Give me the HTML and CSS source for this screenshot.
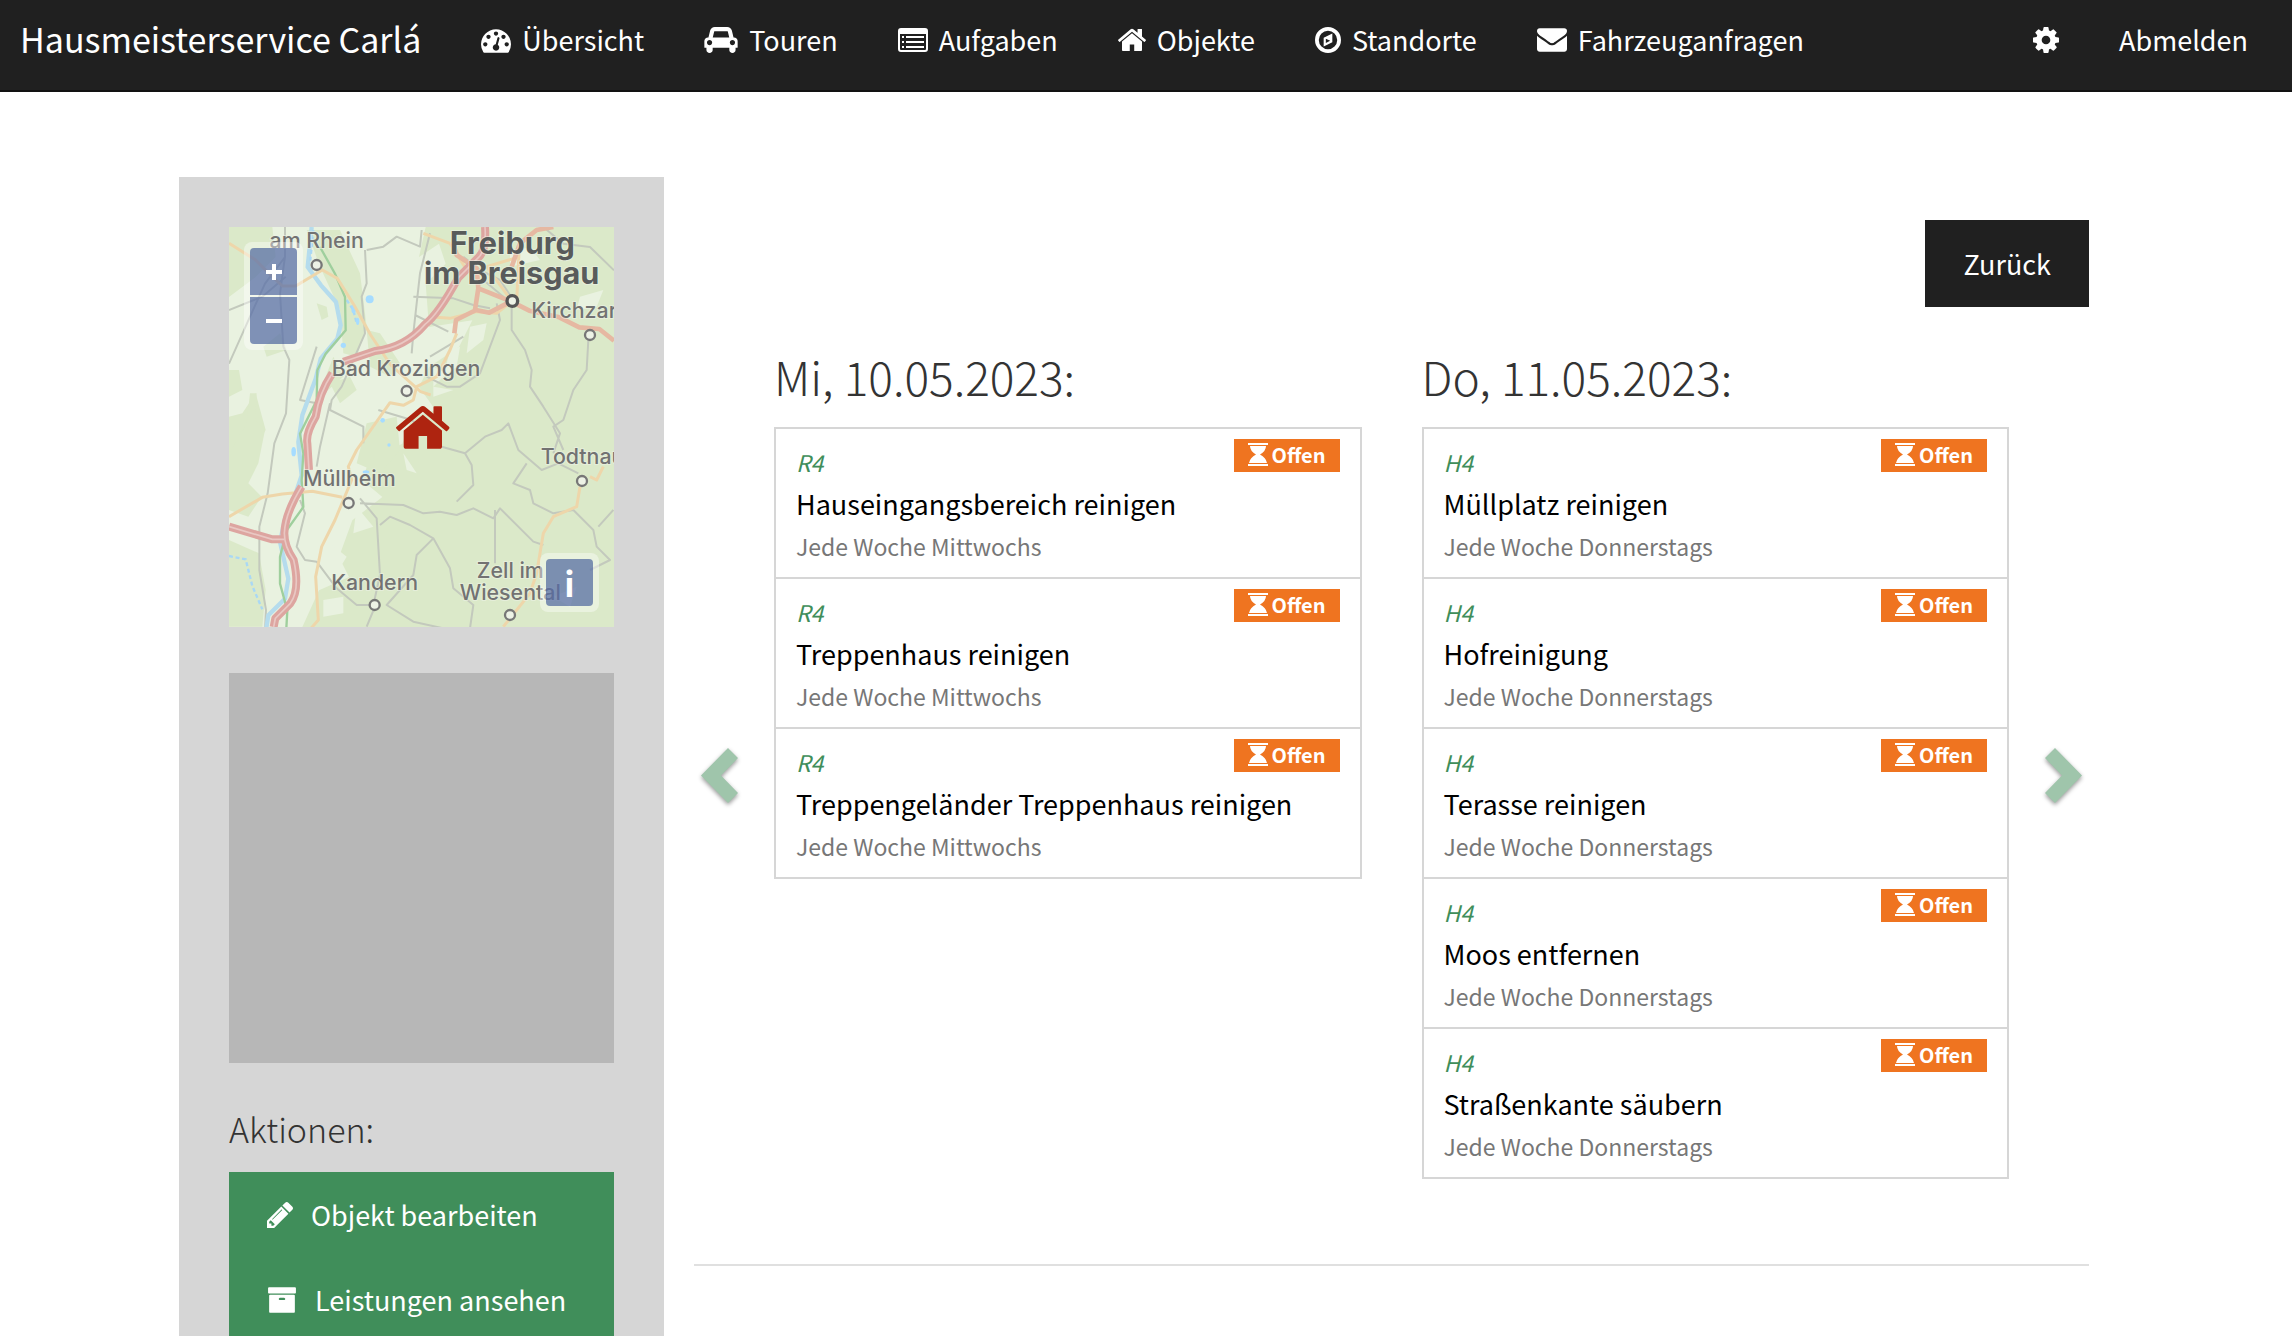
FILE: index.html
```html
<!DOCTYPE html>
<html lang="de">
<head>
<meta charset="utf-8">
<meta name="viewport" content="width=device-width, initial-scale=1">
<title>Hausmeisterservice Carlá</title>
<link rel="stylesheet" href="styles.css">
</head>
<body>
<svg class="sprite" aria-hidden="true">
  <symbol id="i-dash" viewBox="0 128 1792 1536"><path d="M384 1152q0-53-37.5-90.5t-90.5-37.5-90.5 37.5-37.5 90.5 37.5 90.5 90.5 37.5 90.5-37.5 37.5-90.5zm192-448q0-53-37.5-90.5t-90.5-37.5-90.5 37.5-37.5 90.5 37.5 90.5 90.5 37.5 90.5-37.5 37.5-90.5zm428 481l101-382q6-26-7.500-48.500t-38.500-29.500-48 6.500-30 39.500l-101 382q-60 5-107 43.500t-63 98.500q-20 77 20 146t117 89 146-20 89-117q16-60-6-117t-72-91zm660-33q0-53-37.500-90.500t-90.500-37.500-90.500 37.500-37.500 90.500 37.500 90.500 90.500 37.500 90.500-37.500 37.500-90.500zm-640-640q0-53-37.500-90.500t-90.500-37.500-90.500 37.500-37.500 90.500 37.500 90.500 90.500 37.500 90.500-37.500 37.500-90.500zm448 192q0-53-37.500-90.500t-90.500-37.500-90.500 37.500-37.500 90.500 37.500 90.500 90.500 37.500 90.500-37.500 37.500-90.500zm320 448q0 261-141 483-19 29-54 29h-1402q-35 0-54-29-141-221-141-483 0-182 71-348t191-286 286-191 348-71 348 71 286 191 191 286 71 348z"/></symbol>
  <symbol id="i-car" viewBox="0 128 2048 1600"><path d="M480 1088q0-66-47-113t-113-47-113 47-47 113 47 113 113 47 113-47 47-113zm36-320h1016l-89-357q-2-8-14-17.500t-21-9.500h-768q-9 0-21 9.500t-14 17.500zm1372 320q0-66-47-113t-113-47-113 47-47 113 47 113 113 47 113-47 47-113zm160-96v384q0 14-9 23t-23 9h-96v128q0 80-56 136t-136 56-136-56-56-136v-128h-1024v128q0 80-56 136t-136 56-136-56-56-136v-128h-96q-14 0-23-9t-9-23v-384q0-93 65.500-158.500t158.500-65.500h28l105-419q23-94 104-157.500t179-63.500h768q98 0 179 63.500t104 157.500l105 419h28q93 0 158.500 65.500t65.500 158.500z"/></symbol>
  <symbol id="i-list" viewBox="0 0 30 26"><path fill-rule="evenodd" d="M3 1h24a3 3 0 0 1 3 3v18a3 3 0 0 1-3 3H3a3 3 0 0 1-3-3V4a3 3 0 0 1 3-3zM2 7v15q0 1 1 1h24q1 0 1-1V7zM4 9h2v2H4zm4 0h18v2H8zM4 14h2v2H4zm4 0h18v2H8zM4 19h2v2H4zm4 0h18v2H8z"/></symbol>
  <symbol id="i-home" viewBox="89 256 1614 1280"><path d="M1472 992v480q0 26-19 45t-45 19h-384v-384h-256v384h-384q-26 0-45-19t-19-45v-480q0-1 .5-3t.5-3l575-474 575 474q1 2 1 6zm223-69l-62 74q-8 9-21 11h-3q-13 0-21-7l-692-577-692 577q-12 8-24 7-13-2-21-11l-62-74q-8-10-7-23.500t11-21.500l719-599q32-26 76-26t76 26l244 204v-195q0-14 9-23t23-9h192q14 0 23 9t9 23v408l219 182q10 8 11 21.500t-7 23.500z"/></symbol>
  <symbol id="i-compass" viewBox="128 128 1536 1536"><path fill-rule="evenodd" d="M896 128a768 768 0 1 1 0 1536a768 768 0 1 1 0-1536zM896 352a544 544 0 1 0 0 1088a544 544 0 1 0 0-1088zM1152 509v518l-512 256v-518zM768 819v256l256-128z"/></symbol>
  <symbol id="i-mail" viewBox="0 256 1792 1408"><path d="M1792 710v794q0 66-47 113t-113 47h-1472q-66 0-113-47t-47-113v-794q44 49 101 87 362 246 497 345 57 42 92.500 65.500t94.500 48 110 24.500h2q51 0 110-24.500t94.500-48 92.500-65.500q170-123 498-345 57-39 100-87zm0-294q0 79-49 151t-122 123q-376 261-468 325-10 7-42.500 31t-54 38.500-52 32.500-57.500 27-50 9h-2q-23 0-50-9t-57.500-27-52-32.500-54-38.500-42.500-31q-91-64-262-182.500t-205-142.500q-62-42-117-115.500t-55-136.500q0-78 41.500-130t118.500-52h1472q65 0 112.500 47t47.500 113z"/></symbol>
  <symbol id="i-cog" viewBox="128 128 1536 1536"><path d="M1152 896q0-106-75-181t-181-75-181 75-75 181 75 181 181 75 181-75 75-181zm512-109v222q0 12-8 23t-20 13l-185 28q-19 54-39 91 35 50 107 138 10 12 10 25t-9 23q-27 37-99 108t-94 71q-12 0-26-9l-138-108q-44 23-91 38-16 136-29 186-7 28-36 28h-222q-14 0-24.500-8.500t-11.500-21.500l-28-184q-49-16-90-37l-141 107q-10 9-25 9-14 0-25-11-126-114-165-168-7-10-7-23 0-12 8-23 15-21 51-66.500t54-70.500q-27-50-41-99l-183-27q-13-2-21-12.500t-8-23.500v-222q0-12 8-23t19-13l186-28q14-46 39-92-40-57-107-138-10-12-10-24 0-10 9-23 26-36 98.500-107.500t94.500-71.500q13 0 26 10l138 107q44-23 91-38 16-136 29-186 7-28 36-28h222q14 0 24.500 8.500t11.500 21.500l28 184q49 16 90 37l142-107q9-9 24-9 13 0 25 10 129 119 165 170 7 8 7 22 0 12-8 23-15 21-51 66.500t-54 70.500q26 50 41 98l183 28q13 2 21 12.500t8 23.500z"/></symbol>
  <symbol id="i-pencil" viewBox="128 149 1515 1515"><path d="M491 1536l91-91-235-235-91 91v107h128v128h107zm523-928q0-22-22-22-10 0-17 7l-542 542q-7 7-7 17 0 22 22 22 10 0 17-7l542-542q7-7 7-17zm-54-192l416 416-832 832h-416v-416zm683 96q0 53-37 90l-166 166-416-416 166-165q36-38 90-38 53 0 91 38l235 234q37 39 37 91z"/></symbol>
  <symbol id="i-archive" viewBox="0 128 1792 1536"><path d="M1088 832q0-26-19-45t-45-19h-256q-26 0-45 19t-19 45 19 45 45 19h256q26 0 45-19t19-45zm576-192v960q0 26-19 45t-45 19h-1408q-26 0-45-19t-19-45v-960q0-26 19-45t45-19h1408q26 0 45 19t19 45zm64-448v256q0 26-19 45t-45 19h-1536q-26 0-45-19t-19-45v-256q0-26 19-45t45-19h1536q26 0 45 19t19 45z"/></symbol>
  <symbol id="i-hourglass" viewBox="0 0 20 23"><path d="M0 0h20v2H0zM0 21h20v2H0zM2 3h16q0 5-6 8.500q6 3 7 8.500H1q1-5.500 7-8.500Q2 8 2 3z"/></symbol>
  <symbol id="i-left" viewBox="0 0 37 55"><path d="M27 0l10 10-17 17.500 17 17.500-10 10L0 27.500z"/></symbol>
  <symbol id="i-right" viewBox="0 0 37 55"><path d="M10 0L0 10l17 17.500L0 45l10 10 27-27.500z"/></symbol>
</svg>

<nav class="navbar">
  <a class="brand" href="#">Hausmeisterservice Carlá</a>
  <div class="nav-links">
    <a href="#"><svg class="icon w30"><use href="#i-dash"/></svg>Übersicht</a>
    <a href="#"><svg class="icon w34"><use href="#i-car"/></svg>Touren</a>
    <a href="#"><svg class="icon w30"><use href="#i-list"/></svg>Aufgaben</a>
    <a href="#"><svg class="icon w28"><use href="#i-home"/></svg>Objekte</a>
    <a href="#"><svg class="icon w26"><use href="#i-compass"/></svg>Standorte</a>
    <a href="#"><svg class="icon w30"><use href="#i-mail"/></svg>Fahrzeuganfragen</a>
  </div>
  <div class="nav-links nav-right">
    <a href="#" aria-label="Einstellungen"><svg class="icon w26"><use href="#i-cog"/></svg></a>
    <a href="#">Abmelden</a>
  </div>
</nav>

<div class="layout">
  <aside class="sidebar">
    <div class="map">
      <svg class="map-canvas" viewBox="177 171 1155 1200" preserveAspectRatio="xMidYMid slice">
        <rect x="177" y="171" width="1155" height="1200" fill="#dbe9c9"/>
        <path fill="#e9f2e0" d="M177 171h590l-20 90 60-40 20 60-60 60 10 130 130-20-40 80-90 60-30 60 50 70-70 20-30 80-100 50-20 60 60 50-90 70-40 110 30 60-90 40-50 110 20 60-60 60-20 130H240l-63-200V850l60 10 50-80-30-110-40 60-40 10z"/>
        <g fill="#dbe9c9">
          <path d="M177 171h130l10 90-60 60-80 60zM177 600l30 0 10 60-40 20zM230 760l10-90h20l-5 80 30 30-20 100-30 60 40 40-40 60-58-20V850zM410 180h100l60 130 20 160-30 90-40-10-10-130-60-130zM590 480l40 10 60 90-30 40-60-30zM480 640l60-20 20 40-50 40zM590 760l90-20 10 100-60 70-70-30zM490 560l30 60-80 70zM280 530l50-40 20 50-60 20zM440 400l30 10 5 30-20 10z"/>
          <path d="M177 1110l90 40 20 110-10 110H177z"/>
        </g>
        <g fill="#e9f2e0"><path d="M840 540l30-10-10 60-40 30zM900 470l50-10-10 50-50 40zM790 590l40 20-40 40 60 10-60 20zM1020 250l60-20 30 40-90 20zM1230 380l70-20-20 50-60 10zM700 850l40 60-30-10zM560 1010l50 60-60 20zM480 1120l50 40-30 50-60-20zM460 1290l60-10 0 50-60 10zM1150 1280l70-30-20 60z"/></g>
        <g fill="none" stroke="#c3c9bd" stroke-width="6" stroke-linejoin="round">
          <path d="M345 171v90l-60 80-50 110-58 130M177 420l100-40 70-60M345 260l-15 110 10 160 18 40-10 160-35 90-20 150-25 100v130l20 120-5 100"/>
          <path d="M585 240l5 100-15 40 10 110-70 160-30 40-5 30 100 50v50M590 240l50-10 40-30 70 30 5-50M480 700l-30 130-10 60M780 190l-30 120-20 180-5 60M730 380l120 5 60 20 50 10M780 560l100-60M735 435l100 50M440 700l-50-10 50-160"/>
          <path d="M390 990l15 40-25 100 25 40 35 5 60 80 60 50h50l20-90-10-170-50-60M570 1000l130 5 60 25 50-5 50 10 50-20 60 30 20-30 100 100 30 10M860 995l50-50-5-60-20-35-70-20-90-80-100-30M885 850l60-50 50-20 20-20 30 80 70 60 50-20 60 30M1070 880l-40 60 50 20 10 40 60 30 60-10 60 60 10 50 40 40-60 30"/>
          <path d="M1025 410v70l40 60 20 60-5 50 40 60 50 80-20 60M980 400l10 50-60 160-60 40h-40l-60-30M1255 510l-5 90-40 60-30 90-30 20 30 70M1330 1020l-45 50M975 1020v160M630 1065l30-25 60 25 70 40 50 90 10 60 60 50-10 70 60 60 90-10M790 1105l-50 50-10 60-80 90 80 50 90 20M615 1310l-25 60"/>
          <path d="M1120 171l60 50 80 10 72 70M880 260l50 40 60 30 40 60M940 330l60 50"/>
        </g>
        <g fill="none" stroke="#b5dced" stroke-width="13" stroke-linejoin="round">
          <path d="M425 171l-12 120 40 55 45 50 14 70-10 40-50 60-15 60-40 110-12 80 10 100-20 60-30 70-15 70 25 110-10 60-50 50-10 64"/>
        </g>
        <path fill="none" stroke="#a9d8f5" stroke-width="7" stroke-dasharray="12 8" d="M177 1158l50 10 20 80 30 70M530 390l20 30 10 40M430 180l-10 100"/>
        <g fill="#a6dcff"><circle cx="599" cy="388" r="12"/><ellipse cx="551" cy="416" rx="7" ry="14"/><ellipse cx="563" cy="454" rx="5" ry="11"/><circle cx="520" cy="526" r="8"/><circle cx="638" cy="751" r="7"/><ellipse cx="588" cy="906" rx="10" ry="5"/><ellipse cx="371" cy="845" rx="7" ry="14"/><circle cx="657" cy="825" r="5"/></g>
        <path fill="none" stroke="#9fcf9d" stroke-width="7" d="M450 231l45 80 30 70 2 100-60 70-25 50-2 90-50 100 10 60-5 80 5 80-50 70-20 80v80l22 80-5 90-50 60-3 50"/>
        <g fill="none" stroke="#eed6aa" stroke-width="9" stroke-linejoin="round">
          <path d="M177 220l80 50 40 40 40 38h40l80-48 45 25 50 80 50 90 60 90 90 80 30 10M177 1040l100-58 60-10 90 -8 90 18M760 190l80 30 50 80M860 490l-20 50-40 80-60 30-10 40-30 16-40-8-100 142-25 50 10 40-50 120-40 80-18 90 8 130-35 40M780 440l60 5 80-20 60 5 45-35M1030 400l-80-110 100-30M1040 395l8-170M1230 950l-10 60-70 30-30 50-10 60-10 60-20 60-80 100M1260 920l20 10 20-40"/>
        </g>
        <g fill="none" stroke="#e6b8a2" stroke-width="14" stroke-linejoin="round">
          <path d="M853 490l5-40 60-30 40 8 65-34 55 28 90 20 60 30 60 5 44 35M915 420l10-65 100 40M925 355l-5-60-60-40-10-35M1025 290l25-70 50-40 50-9"/>
        </g>
        <g fill="none" stroke="#dda5a0" stroke-width="24" stroke-linejoin="round">
          <path d="M945 171q5 70-20 92l-60 60q-60 110-100 140-60 70-150 80l-95 32M487 610q-40 60-50 130-30 50-25 80l5 80M395 950q-50 80-52 140 0 40 28 80 20 90-10 130l-45 45-5 26M177 1070l130 38h35"/>
        </g>
        <path fill="none" stroke="#e9c8c3" stroke-width="5" d="M945 171q5 70-20 92l-60 60q-60 110-100 140-60 70-150 80l-95 32M487 610q-40 60-50 130-30 50-25 80l5 80M395 950q-50 80-52 140 0 40 28 80 20 90-10 130l-45 45-5 26M177 1070l130 38h35"/>
        <g fill="#edf2e6" stroke="#777" stroke-width="7">
          <circle cx="440" cy="285" r="15"/><circle cx="710" cy="663" r="15"/><circle cx="536" cy="999" r="15"/><circle cx="1260" cy="495" r="15"/><circle cx="1236" cy="933" r="15"/><circle cx="614" cy="1305" r="15"/><circle cx="1020" cy="1335" r="15"/>
          <circle cx="1027" cy="393" r="16" stroke="#555" stroke-width="10"/>
        </g>
        <g class="place">
          <text x="440" y="235">am Rhein</text>
          <text x="708" y="618">Bad Krozingen</text>
          <text x="538" y="949">Müllheim</text>
          <text x="614" y="1259">Kandern</text>
          <text x="1021" y="1224">Zell im</text>
          <text x="1021" y="1289">Wiesental</text>
          <text class="from-left" x="1084" y="445">Kirchzarten</text>
          <text class="from-left" x="1112" y="883">Todtnau</text>
        </g>
        <g class="place city">
          <text x="1027" y="251">Freiburg</text>
          <text x="1025" y="343">im Breisgau</text>
        </g>
        <use href="#i-home" x="678" y="708" width="161" height="129" fill="#ae2410"/>
      </svg>
      <div class="map-control zoom">
        <button type="button" aria-label="Vergrößern"><svg viewBox="0 0 16 16"><path d="M0 6h6V0h4v6h6v4h-6v6H6v-6H0z"/></svg></button>
        <button type="button" aria-label="Verkleinern"><svg viewBox="0 0 16 16"><path d="M0 6h16v4H0z"/></svg></button>
      </div>
      <div class="map-control info">
        <button type="button">i</button>
      </div>
    </div>
    <div class="photo"></div>
    <h4>Aktionen:</h4>
    <div class="actions">
      <a href="#"><svg class="icon w26"><use href="#i-pencil"/></svg>Objekt bearbeiten</a>
      <a href="#"><svg class="icon w30"><use href="#i-archive"/></svg>Leistungen ansehen</a>
    </div>
  </aside>

  <main class="content">
    <div class="toolbar"><button class="back" type="button">Zurück</button></div>
    <div class="carousel">
      <button class="arrow" type="button" aria-label="Zurückblättern"><svg><use href="#i-left"/></svg></button>
      <div class="days">
        <section>
          <h2>Mi, 10.05.2023:</h2>
          <ul class="tasks">
            <li><span class="badge"><svg><use href="#i-hourglass"/></svg>Offen</span><em>R4</em><strong>Hauseingangsbereich reinigen</strong><small>Jede Woche Mittwochs</small></li>
            <li><span class="badge"><svg><use href="#i-hourglass"/></svg>Offen</span><em>R4</em><strong>Treppenhaus reinigen</strong><small>Jede Woche Mittwochs</small></li>
            <li><span class="badge"><svg><use href="#i-hourglass"/></svg>Offen</span><em>R4</em><strong>Treppengeländer Treppenhaus reinigen</strong><small>Jede Woche Mittwochs</small></li>
          </ul>
        </section>
        <section>
          <h2>Do, 11.05.2023:</h2>
          <ul class="tasks">
            <li><span class="badge"><svg><use href="#i-hourglass"/></svg>Offen</span><em>H4</em><strong>Müllplatz reinigen</strong><small>Jede Woche Donnerstags</small></li>
            <li><span class="badge"><svg><use href="#i-hourglass"/></svg>Offen</span><em>H4</em><strong>Hofreinigung</strong><small>Jede Woche Donnerstags</small></li>
            <li><span class="badge"><svg><use href="#i-hourglass"/></svg>Offen</span><em>H4</em><strong>Terasse reinigen</strong><small>Jede Woche Donnerstags</small></li>
            <li><span class="badge"><svg><use href="#i-hourglass"/></svg>Offen</span><em>H4</em><strong>Moos entfernen</strong><small>Jede Woche Donnerstags</small></li>
            <li><span class="badge"><svg><use href="#i-hourglass"/></svg>Offen</span><em>H4</em><strong>Straßenkante säubern</strong><small>Jede Woche Donnerstags</small></li>
          </ul>
        </section>
      </div>
      <button class="arrow next" type="button" aria-label="Weiterblättern"><svg><use href="#i-right"/></svg></button>
    </div>
    <hr>
  </main>
</div>
</body>
</html>
```
FILE: styles.css
```css
* { box-sizing: border-box; }

body {
  margin: 0;
  background: #fff;
  color: #333;
  font: 400 27px/42px "Noto Sans CJK SC", "Noto Sans", sans-serif;
}

a { color: inherit; text-decoration: none; }
button { font: inherit; border: 0; padding: 0; cursor: pointer; }
svg { fill: currentColor; }
.sprite { position: absolute; width: 0; height: 0; }

.icon { flex: none; height: 26px; }
.w26 { width: 26px; }
.w28 { width: 28px; }
.w30 { width: 30px; }
.w34 { width: 34px; }

/* Navigation */
.navbar {
  display: flex;
  align-items: flex-start;
  height: 92px;
  padding: 19px 14px 0 20px;
  background: #202020;
  border-bottom: 2px solid #121212;
  color: #fff;
  white-space: nowrap;
}
.brand { padding-right: 30px; font-size: 34px; line-height: 40px; }
.nav-links { display: flex; }
.nav-links a { display: flex; align-items: center; gap: 11px; padding: 0 30px; }
.nav-right { margin-left: auto; }

/* Page */
.layout {
  display: grid;
  grid-template-columns: 485fr 1395fr;
  gap: 30px;
  height: calc(100vh - 92px);
  padding: 85px 203px 0 179px;
  overflow: hidden;
}
.sidebar { padding: 50px; background: #d6d6d6; overflow: hidden; }

/* Map */
.map { position: relative; height: 400px; overflow: hidden; }
.map-canvas { display: block; width: 100%; height: 100%; }
.place {
  font-family: Inter, sans-serif;
  font-size: 64px;
  font-weight: 500;
  fill: #727272;
  text-anchor: middle;
  stroke: #edf2e6;
  stroke-width: 6px;
  stroke-opacity: .6;
  paint-order: stroke;
}
.city { font-size: 92px; font-weight: 700; fill: #585b5b; }
.from-left { text-anchor: start; }
.map-control {
  position: absolute;
  display: grid;
  gap: 2px;
  padding: 6px;
  border-radius: 8px;
  background: rgba(255, 255, 255, .4);
}
.map-control.zoom { top: 15px; left: 15px; }
.map-control.info { right: 15px; bottom: 15px; }
.map-control button {
  display: grid;
  place-items: center;
  width: 47px;
  height: 47px;
  border-radius: 4px;
  background: rgba(30, 60, 136, .54);
  color: #fff;
  font-size: 34px;
  font-weight: 700;
  line-height: 46px;
}
.zoom button:first-child { border-radius: 4px 4px 0 0; }
.zoom button:last-child { border-radius: 0 0 4px 4px; }
.map-control svg { width: 16px; height: 16px; }

.photo { height: 390px; margin-top: 46px; background: #b7b7b7; }

h2, h4 { margin: 0; font-weight: 300; }
h4 { margin: 41px 0 18px; font-size: 34px; line-height: 50px; }

.actions { display: grid; background: #408e5a; color: #fff; white-space: nowrap; }
.actions a { display: flex; align-items: center; gap: 18px; height: 85px; padding: 0 38px; }

/* Schedule */
.toolbar { display: flex; justify-content: flex-end; padding-top: 43px; }
.back { height: 87px; padding: 0 38px; background: #202020; color: #fff; }

.carousel {
  display: grid;
  grid-template-columns: 80px 1fr 80px;
  margin-top: 33px;
}
.arrow {
  display: grid;
  place-items: center;
  align-self: start;
  width: 51px;
  height: 870px;
  background: none;
  color: #9fc5ab;
}
.arrow.next { justify-self: end; }
.arrow svg { width: 37px; height: 55px; overflow: visible; filter: drop-shadow(0 2px 2px rgba(0, 0, 0, .4)); }

.days { display: grid; grid-template-columns: 1fr 1fr; gap: 60px; }
.days h2 { height: 87px; font-size: 46px; line-height: 72px; }

.tasks { margin: 0; padding: 0; list-style: none; border: 2px solid #d6d6d6; border-bottom: 0; }
.tasks li {
  position: relative;
  display: grid;
  align-content: start;
  height: 150px;
  padding: 12px 20px 0;
  border-bottom: 2px solid #d6d6d6;
}
.tasks em { color: #408e5a; font-size: 23px; }
.tasks strong { color: #000; font-weight: 400; }
.tasks small { color: #777; font-size: 23px; }
.badge {
  position: absolute;
  top: 10px;
  right: 20px;
  display: flex;
  gap: 4px;
  height: 33px;
  padding: 0 14px;
  background: #ef7420;
  color: #fff;
  font-size: 20px;
  font-weight: 700;
  line-height: 31px;
}
.badge svg { width: 20px; height: 23px; margin-top: 4px; }

hr { margin: 54px 0 0; border: 0; border-top: 2px solid #e0e0e0; }
```
